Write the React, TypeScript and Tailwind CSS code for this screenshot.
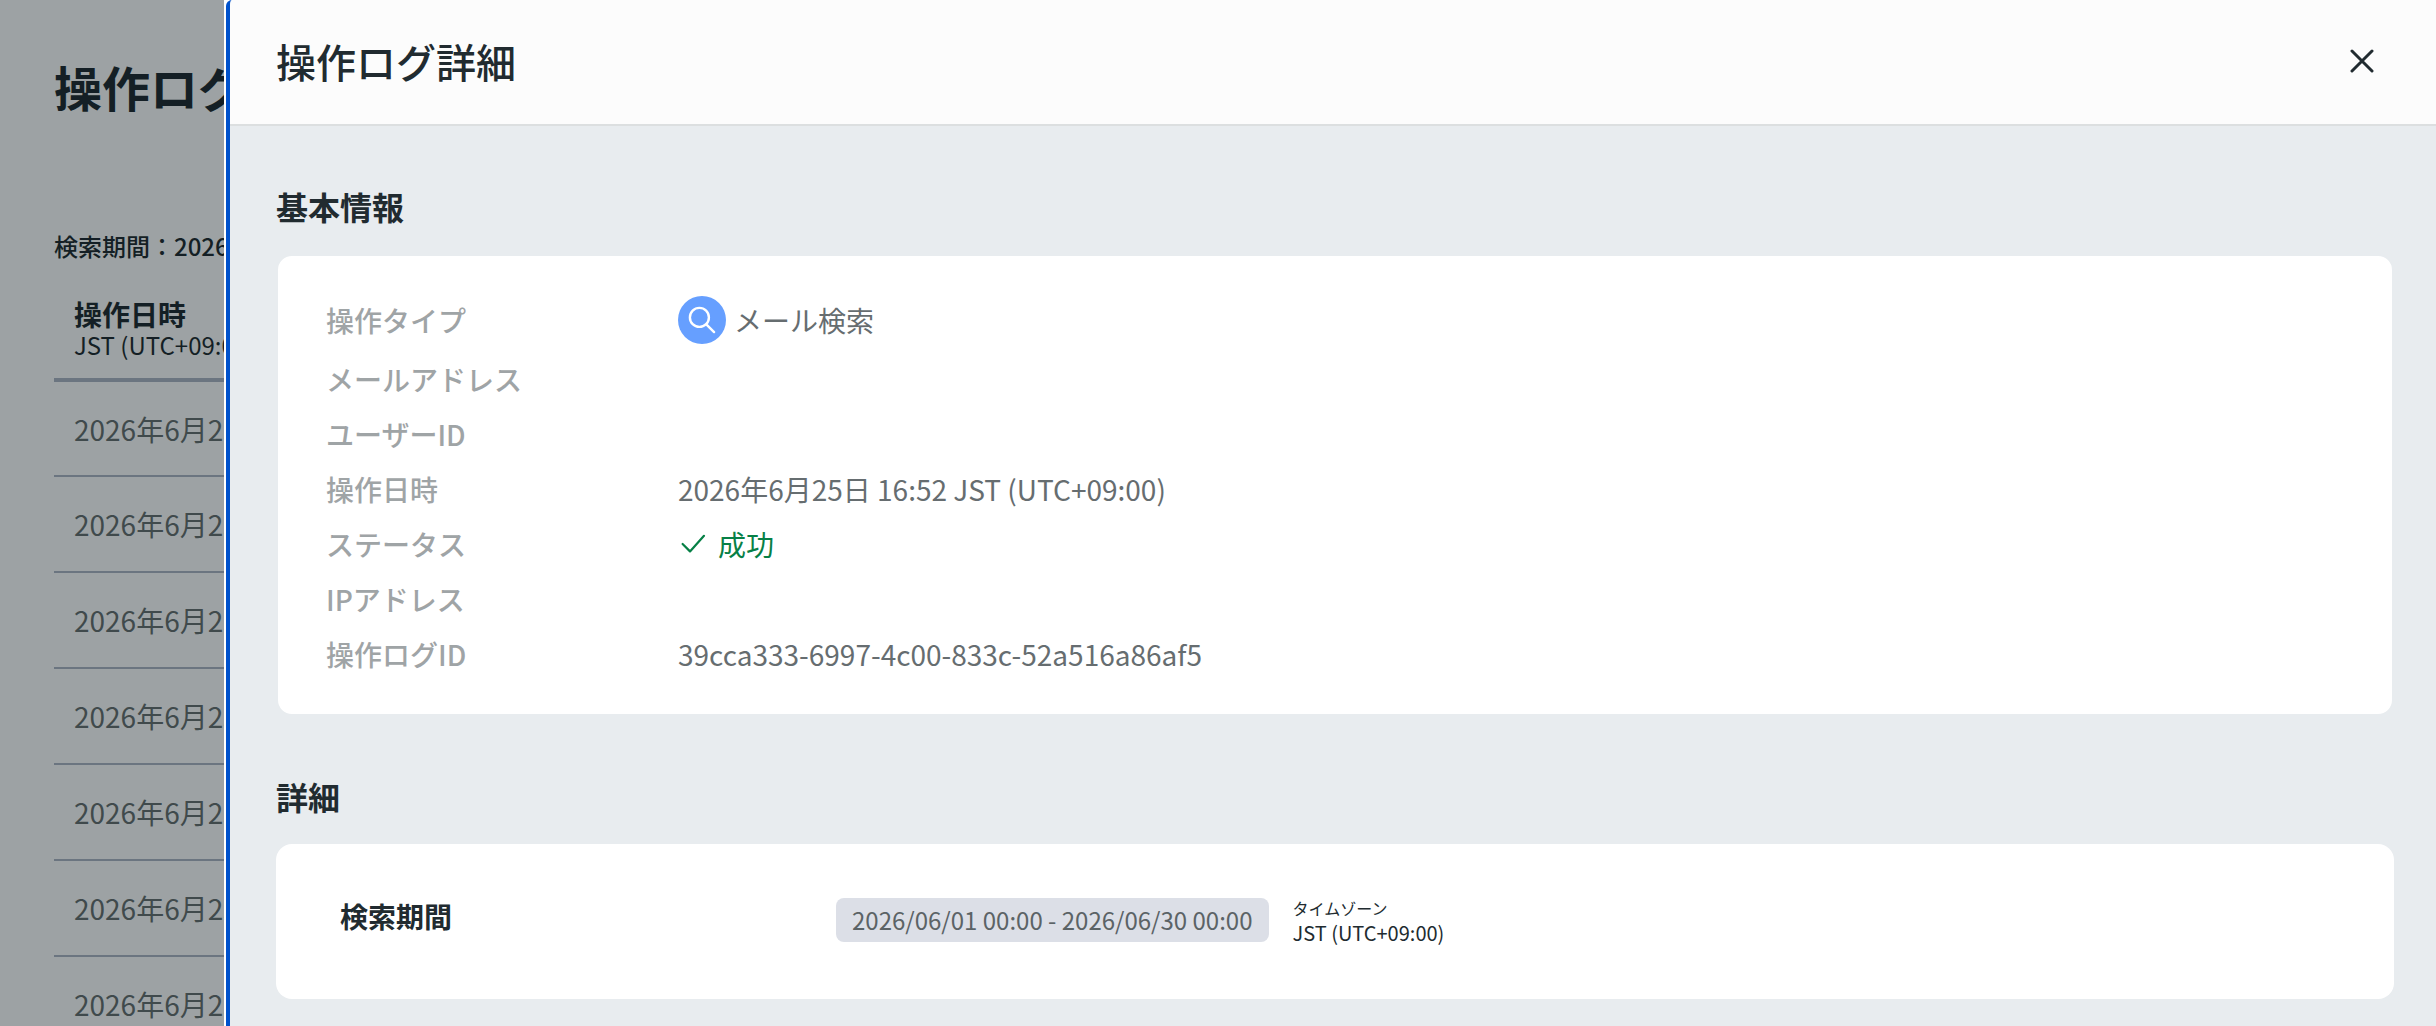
import React from "react";

interface DetailRow {
  label: string;
  value?: React.ReactNode;
}

const SearchIcon = () => (
  <svg viewBox="0 0 48 48" className="size-12 shrink-0" aria-hidden="true">
    <circle cx="24" cy="24" r="24" fill="#669fff" />
    <g fill="none" stroke="#fff" strokeWidth="2.4" strokeLinecap="round">
      <circle cx="21.4" cy="21.4" r="9.5" />
      <path d="M28.3 28.3l7.8 7.8" />
    </g>
  </svg>
);

const CheckIcon = () => (
  <svg viewBox="0 0 28 28" className="size-7 shrink-0" fill="none" stroke="currentColor" strokeWidth="2.2" strokeLinecap="round" strokeLinejoin="round" aria-hidden="true">
    <path d="M4.6 13l7.4 7.4L26 4.8" />
  </svg>
);

const CloseIcon = () => (
  <svg viewBox="0 0 24 24" className="size-6" fill="none" stroke="currentColor" strokeWidth="3" strokeLinecap="round" aria-hidden="true">
    <path d="M2 2l20 20M22 2L2 22" />
  </svg>
);

const logRows = Array.from({ length: 7 }, (_, i) => ({ id: i, date: "2026年6月25日" }));

const detailRows: DetailRow[] = [
  {
    label: "操作タイプ",
    value: (
      <span className="flex items-center gap-2">
        <SearchIcon />
        メール検索
      </span>
    ),
  },
  { label: "メールアドレス" },
  { label: "ユーザーID" },
  { label: "操作日時", value: "2026年6月25日 16:52 JST (UTC+09:00)" },
  {
    label: "ステータス",
    value: (
      <span className="flex items-center gap-3 text-[#078046]">
        <CheckIcon />
        成功
      </span>
    ),
  },
  { label: "IPアドレス" },
  { label: "操作ログID", value: "39cca333-6997-4c00-833c-52a516a86af5" },
];

const LogPage = () => (
  <main className="h-full overflow-hidden whitespace-nowrap bg-[#9da2a4] pl-[54px] pt-[50px] text-[#141f25]">
    <h1 className="text-5xl font-bold leading-[72px]">操作ログ</h1>
    <p className="mt-[106px] text-2xl font-medium leading-9">検索期間：2026</p>
    <table className="mt-8 w-full border-collapse text-left">
      <thead>
        <tr className="border-b-4 border-[#6b7580]">
          <th className="px-5 pb-5 pt-0 font-normal">
            <div className="text-[28px] font-bold leading-9">操作日時</div>
            <div className="text-2xl leading-[26px]">JST (UTC+09:00)</div>
          </th>
        </tr>
      </thead>
      <tbody>
        {logRows.map((row) => (
          <tr key={row.id} className="h-24 border-b-2 border-[#6b7580]">
            <td className="px-5 py-0 text-[28px] leading-10 text-[#404a4c]">{row.date}</td>
          </tr>
        ))}
      </tbody>
    </table>
  </main>
);

const DetailPanel = () => (
  <div
    role="dialog"
    aria-labelledby="panel-title"
    className="fixed inset-y-0 left-[224px] right-0 border-l-2 border-white bg-white"
  >
    <div className="flex h-full flex-col overflow-hidden rounded-tl-md border-l-4 border-[#0052cc] bg-[#e8ecef]">
      <header className="flex items-center justify-between border-b-2 border-[#dcdfe0] bg-[#fcfcfc] pb-[34px] pl-[46px] pr-[62px] pt-8">
        <h2 id="panel-title" className="text-[40px] font-medium leading-[58px]">
          操作ログ詳細
        </h2>
        <button type="button" aria-label="閉じる">
          <CloseIcon />
        </button>
      </header>

      <div className="pl-[46px] pr-[42px]">
        <section className="mt-14">
          <h3 className="text-[32px] font-bold leading-[48px]">基本情報</h3>
          <dl className="mt-6 flex flex-col gap-4 rounded-2xl border-2 border-[#e8ecef] bg-white px-12 py-10 text-[28px] leading-[39px]">
            {detailRows.map(({ label, value }) => (
              <div key={label} className="flex items-center">
                <dt className="w-[352px] shrink-0 font-medium text-[#9fa4a6]">{label}</dt>
                <dd className="text-[#666d70]">{value}</dd>
              </div>
            ))}
          </dl>
        </section>

        <section className="mt-14">
          <h3 className="text-[32px] font-bold leading-[48px]">詳細</h3>
          <div className="mt-6 flex items-start rounded-2xl bg-white px-16 pb-[51px] pt-[54px]">
            <h4 className="w-[496px] shrink-0 text-[28px] font-bold leading-9">検索期間</h4>
            <span className="rounded-lg bg-[#dcdfe7] px-4 text-2xl leading-[44px] text-[#5b6366]">
              2026/06/01 00:00 - 2026/06/30 00:00
            </span>
            <div className="ml-6">
              <div className="text-base leading-5">タイムゾーン</div>
              <div className="text-xl leading-[30px]">JST (UTC+09:00)</div>
            </div>
          </div>
        </section>
      </div>
    </div>
  </div>
);

export default function App() {
  return (
    <div className="h-screen font-['Noto_Sans_CJK_JP',sans-serif] text-[#212b30]" lang="ja">
      <LogPage />
      <DetailPanel />
    </div>
  );
}
